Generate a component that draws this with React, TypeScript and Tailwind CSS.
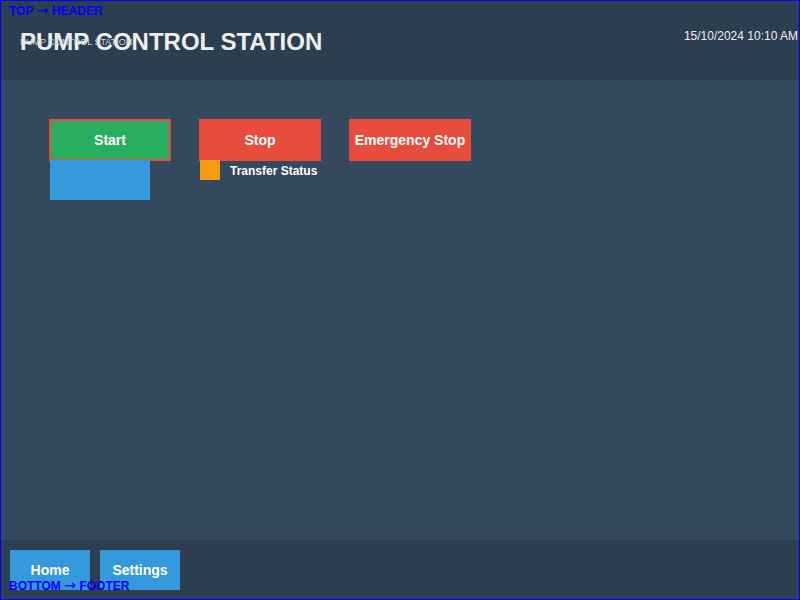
import type { ReactNode } from "react";

const fontFamily = "font-['Liberation_Sans',Arial,sans-serif]";

function ControlButton({ className, children }: { className: string; children: ReactNode }) {
  return (
    <button
      type="button"
      className={`h-[42px] w-[122px] border-2 border-[#e74c3c] text-sm font-bold whitespace-nowrap text-white ${className}`}
    >
      {children}
    </button>
  );
}

function NavButton({ children }: { children: ReactNode }) {
  return (
    <button type="button" className="h-10 w-20 bg-[#3498db] text-sm font-bold text-white">
      {children}
    </button>
  );
}

function Arrow() {
  return (
    <span className="inline-block w-3 text-center font-['DejaVu_Sans',sans-serif] text-sm leading-3 font-normal">
      →
    </span>
  );
}

export default function App() {
  return (
    <div className={`relative flex min-h-screen flex-col bg-[#34495e] text-white ${fontFamily}`}>
      <header className="relative flex h-20 items-start justify-between bg-[#2c3e50] pl-5 text-[#ecf0f1]">
        <h1 className="mt-7 text-2xl leading-7 font-bold whitespace-nowrap">PUMP CONTROL STATION</h1>
        <time dateTime="2024-10-15T10:10" className="mt-7 mr-0.5 text-xs whitespace-nowrap">
          15/10/2024 10:10 AM
        </time>
        <span className="absolute top-9 left-5 text-[9px] leading-3 whitespace-nowrap text-[#d0d5d9]">
          PUMP CONTROL STATION
        </span>
      </header>

      <main className="flex flex-1 items-start gap-7 pt-[39px] pl-[49px]">
        <div>
          <ControlButton className="block bg-[#27ae60]">Start</ControlButton>
          <div className="relative -mt-px ml-px h-10 w-[100px] bg-[#3498db]" />
        </div>
        <div>
          <ControlButton className="block bg-[#e74c3c]">Stop</ControlButton>
          <div className="relative -mt-px ml-px flex items-start gap-[10px]">
            <span className="h-5 w-5 bg-[#f39c12]" />
            <span className="text-xs leading-[22px] font-bold whitespace-nowrap">Transfer Status</span>
          </div>
        </div>
        <ControlButton className="bg-[#e74c3c] px-0">Emergency Stop</ControlButton>
      </main>

      <footer className="flex h-[60px] items-center gap-[10px] bg-[#2c3e50] pl-[10px]">
        <NavButton>Home</NavButton>
        <NavButton>Settings</NavButton>
      </footer>

      <div className="pointer-events-none absolute inset-0 flex flex-col justify-between border border-[#0000ff] pt-0.5 pb-[5px] pl-2 text-xs font-bold text-[#0000ff]">
        <span>
          TOP <Arrow /> HEADER
        </span>
        <span>
          BOTTOM <Arrow /> FOOTER
        </span>
      </div>
    </div>
  );
}
